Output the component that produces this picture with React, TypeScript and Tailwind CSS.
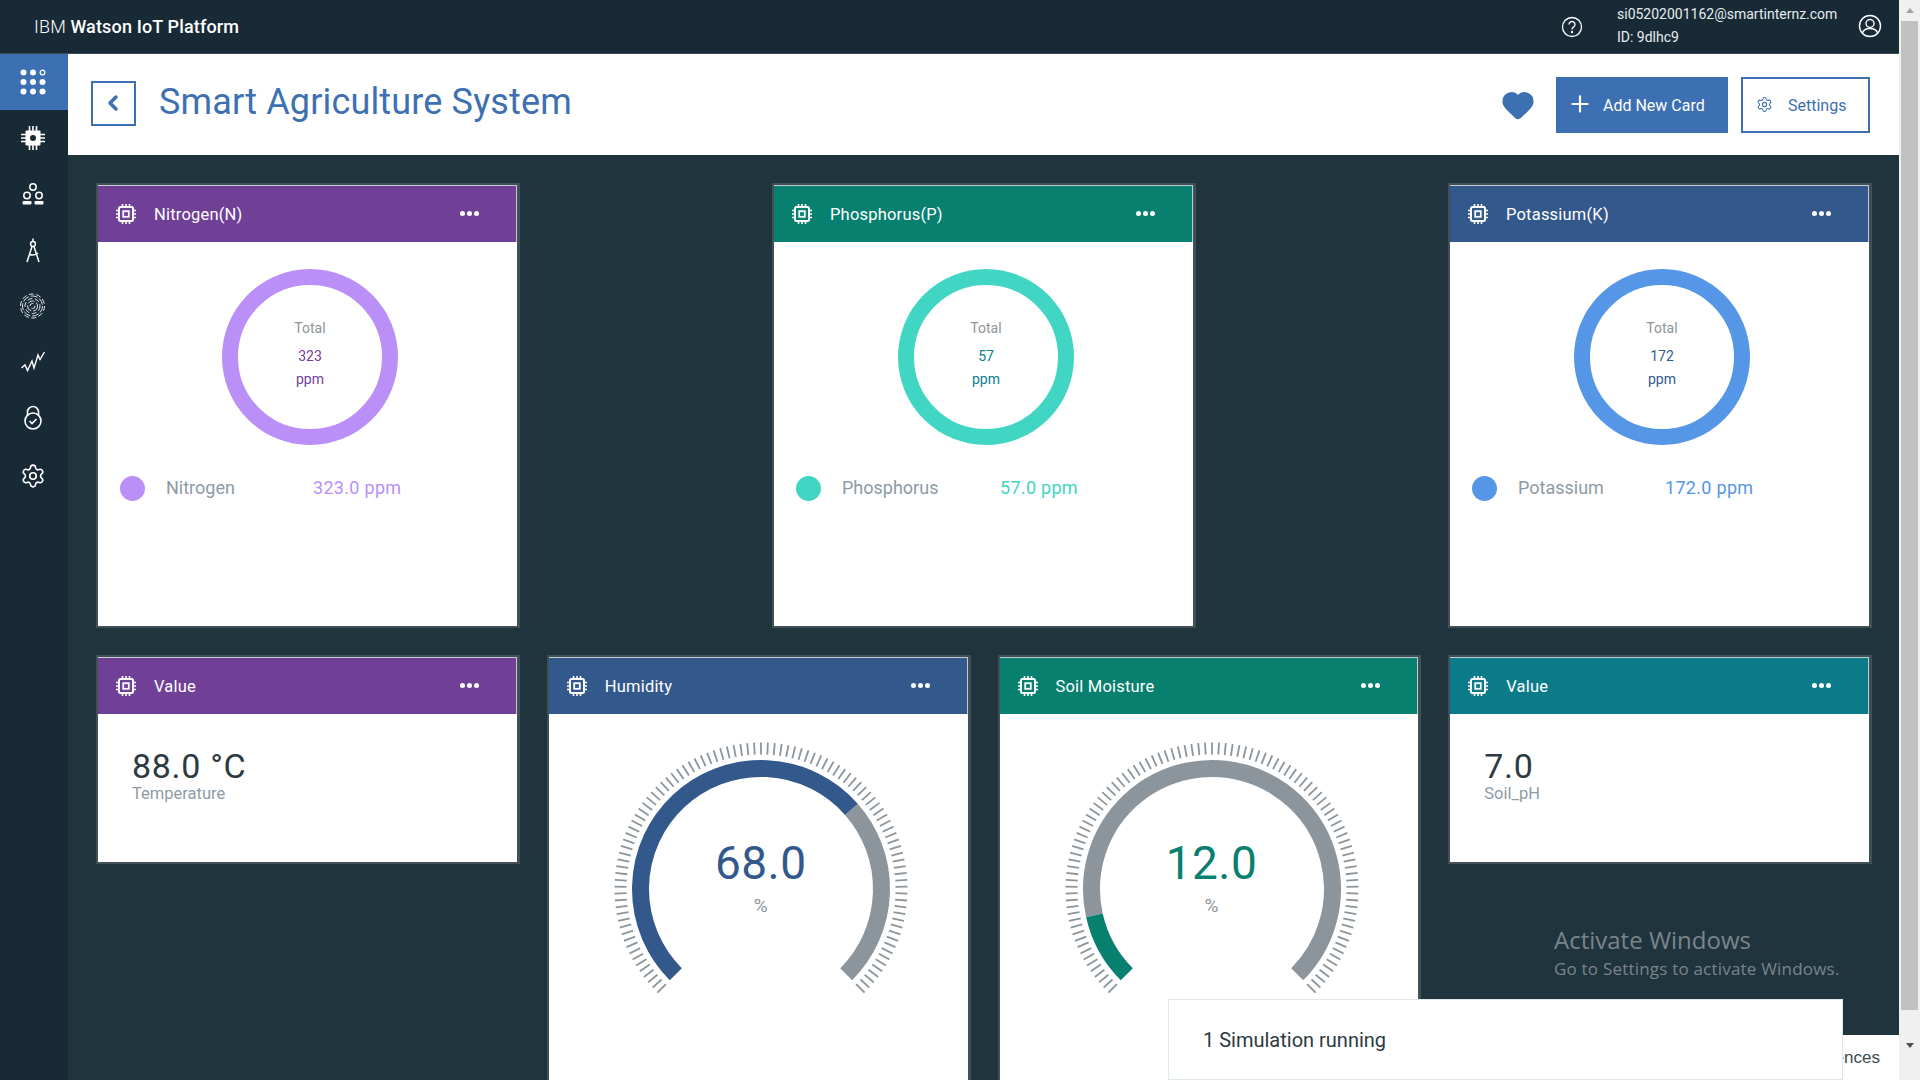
import React from "react";
import { Settings, Plus, ChevronLeft, Heart } from "lucide-react";

const FONT = "font-['Roboto','Noto_Sans',sans-serif]";

function Chip() {
  return (
    <svg width="22" height="22" viewBox="0 0 22 22" fill="none" stroke="white" className="shrink-0">
      <rect x="4" y="4" width="14" height="14" rx="1.5" strokeWidth="2" />
      <rect x="8.2" y="8.2" width="5.6" height="5.6" strokeWidth="1.8" />
      <path d="M7.5 1v3M11 1v3M14.5 1v3M7.5 18v3M11 18v3M14.5 18v3M1 7.5h3M1 11h3M1 14.5h3M18 7.5h3M18 11h3M18 14.5h3" strokeWidth="1.6" />
    </svg>
  );
}

function Dots() {
  return (
    <div className="flex gap-[2px] shrink-0">
      <span className="w-[5px] h-[5px] rounded-full bg-white" />
      <span className="w-[5px] h-[5px] rounded-full bg-white" />
      <span className="w-[5px] h-[5px] rounded-full bg-white" />
    </div>
  );
}

function Card({ title, head, className, children }: { title: string; head: string; className: string; children?: React.ReactNode }) {
  return (
    <div className={`border-2 border-r-[3px] border-[#414f56] bg-white overflow-hidden ${className}`}>
      <div className={`h-[57px] pl-[17px] pr-[37px] flex items-center border-t border-r border-[#c3cbd0] ${head}`}>
        <Chip />
        <span className="ml-[17px] mt-[2px] flex-1 text-white text-[16.5px] tracking-[0.2px]">{title}</span>
        <div className="-mt-[2px]">
          <Dots />
        </div>
      </div>
      {children}
    </div>
  );
}

function Donut({ color, total, textColor, name, value, nameW }: { color: string; total: string; textColor: string; name: string; value: string; nameW: string }) {
  return (
    <div>
      <div className="relative ml-[124px] mt-[27px] w-[176px] h-[176px]">
        <svg width="176" height="176" viewBox="0 0 176 176">
          <circle cx="88" cy="88" r="80" fill="none" stroke={color} strokeWidth="16" />
        </svg>
        <div className="absolute inset-0 flex flex-col items-center text-[14px] pt-[49px]">
          <span className="text-[#8c959b] leading-[20px]">Total</span>
          <span className="leading-[20px] mt-[8px]" style={{ color: textColor }}>{total}</span>
          <span className="leading-[20px] mt-[3px]" style={{ color: textColor }}>ppm</span>
        </div>
      </div>
      <div className="flex items-center ml-[22px] mt-[31px]">
        <span className="w-[25px] h-[25px] rounded-full" style={{ backgroundColor: color }} />
        <span className={`ml-[21px] -mt-[2px] text-[18px] text-[#8c9ba5] ${nameW}`}>{name}</span>
        <span className="text-[18px] -mt-[2px] tracking-[0.3px]" style={{ color }}>{value}</span>
      </div>
    </div>
  );
}

function polar(r: number, deg: number) {
  const a = ((deg - 90) * Math.PI) / 180;
  return [150 + r * Math.cos(a), 150 + r * Math.sin(a)];
}

function arc(r: number, from: number, to: number) {
  const [x1, y1] = polar(r, from);
  const [x2, y2] = polar(r, to);
  return `M${x1} ${y1}A${r} ${r} 0 ${to - from > 180 ? 1 : 0} 1 ${x2} ${y2}`;
}

function Gauge({ pct, color, label }: { pct: number; color: string; label: string }) {
  const start = -135;
  const mid = start + (270 * pct) / 100;
  const ticks = Array.from({ length: 101 }, (_, i) => start + i * 2.7);
  return (
    <div className="relative w-[300px] h-[300px] ml-[62px] mt-[25px]">
      <svg width="300" height="300" viewBox="0 0 300 300">
        {ticks.map((t) => {
          const [x1, y1] = polar(134.5, t);
          const [x2, y2] = polar(146.5, t);
          return <line key={t} x1={x1} y1={y1} x2={x2} y2={y2} stroke="#8c959b" strokeWidth="1.8" />;
        })}
        <path d={arc(120.5, mid, 135)} fill="none" stroke="#8c959b" strokeWidth="17" />
        <path d={arc(120.5, start, mid)} fill="none" stroke={color} strokeWidth="17" />
      </svg>
      <div className="absolute inset-0 flex flex-col items-center pt-[96px]">
        <span className="text-[46px] leading-[56px] tracking-[0.5px]" style={{ color }}>{label}</span>
        <span className="text-[19px] leading-[20px] text-[#8c959b] mt-[5px]">%</span>
      </div>
    </div>
  );
}

function ValueBody({ value, label }: { value: string; label: string }) {
  return (
    <div className="pl-[34px] pt-[30px]">
      <div className="text-[34px] leading-[44px] text-[#2d3a42] tracking-[0.7px]">{value}</div>
      <div className="text-[16.5px] leading-[20px] -mt-[4px] text-[#8c9ba5]">{label}</div>
    </div>
  );
}

function NavIcon({ children }: { children: React.ReactNode }) {
  return (
    <svg width="28" height="28" viewBox="0 0 28 28" fill="none" stroke="white" strokeWidth="1.5">
      {children}
    </svg>
  );
}

const fingerprintRadii = [2.5, 5, 7.5, 10, 12];

function Sidebar() {
  const items: { pad: string; node: React.ReactNode }[] = [
    {
      pad: "",
      node: (
        <NavIcon>
          <path d="M10.5 2v24M14 2v24M17.5 2v24M2 10.5h24M2 14h24M2 17.5h24" strokeWidth="1.6" />
          <rect x="6.5" y="6.5" width="15" height="15" rx="1" fill="white" stroke="none" />
          <circle cx="14" cy="14" r="3" fill="#172a36" stroke="none" />
        </NavIcon>
      ),
    },
    {
      pad: "pt-[2px]",
      node: (
        <NavIcon>
          <circle cx="14" cy="6" r="3.2" />
          <circle cx="8" cy="14.5" r="3.2" />
          <circle cx="20" cy="14.5" r="3.2" />
          <rect x="3.5" y="20" width="9" height="3.6" rx="1" fill="white" stroke="none" />
          <rect x="15.5" y="20" width="9" height="3.6" rx="1" fill="white" stroke="none" />
        </NavIcon>
      ),
    },
    {
      pad: "pt-[1px]",
      node: (
        <NavIcon>
          <path d="M14 1.5v3" />
          <circle cx="14" cy="7" r="2.4" />
          <path d="M13 9.5 8 25M15 9.5 20 25M10.5 17.5c3 1 6 .5 8.5-1.5" />
        </NavIcon>
      ),
    },
    {
      pad: "",
      node: (
        <NavIcon>
          {fingerprintRadii.map((r, i) => (
            <circle key={r} cx="13.5" cy="14" r={r} strokeWidth="0.9" strokeDasharray={i % 2 ? "7 2" : "5 2.5"} />
          ))}
        </NavIcon>
      ),
    },
    {
      pad: "pb-[3px]",
      node: (
        <NavIcon>
          <path d="M2.5 21l3.5-3 2.5 5.500L13 14l2 7 4-13 2 4.500L25.500 5" strokeWidth="1.400" />
        </NavIcon>
      ),
    },
    {
      pad: "",
      node: (
        <NavIcon>
          <circle cx="14" cy="17" r="8" strokeWidth="1.6" />
          <path d="M8.5 11.5V8a5.5 5.5 0 0 1 11 0v3.500" strokeWidth="1.6" />
          <path d="M10.500 17l2.500 2.500 4.500-4.500" strokeWidth="1.6" />
        </NavIcon>
      ),
    },
    { pad: "pt-[3px]", node: <Settings size={26} color="white" strokeWidth={1.5} /> },
  ];
  return (
    <div className="w-[68px] shrink-0 bg-[#172a36] flex flex-col">
      <div className="h-[56px] bg-[#3d70b2] flex items-center justify-center pr-[2px]">
        <svg width="28" height="28" viewBox="0 0 28 28" fill="white">
          <circle cx="4.500" cy="4.500" r="3" />
          <circle cx="14" cy="4.500" r="3" />
          <circle cx="23.500" cy="4.500" r="2.300" fill="none" stroke="white" strokeWidth="1.300" />
          <circle cx="4.500" cy="14" r="3" />
          <circle cx="14" cy="14" r="3" />
          <circle cx="23.500" cy="14" r="3" />
          <circle cx="4.500" cy="23.500" r="3" />
          <circle cx="14" cy="23.500" r="3" />
          <circle cx="23.500" cy="23.500" r="3" />
        </svg>
      </div>
      {items.map((it, i) => (
        <div key={i} className={`h-[56px] flex items-center justify-center pr-[2px] ${it.pad}`}>{it.node}</div>
      ))}
    </div>
  );
}

export default function App() {
  return (
    <div className={`relative w-[1920px] h-[1080px] overflow-hidden flex bg-[#20343e] ${FONT}`}>
      <div className="w-[1899px] flex flex-col">
        <header className="h-[54px] shrink-0 bg-[#172a36] border-b border-[#3a4b55] flex items-center pl-[34px] pr-[17px] text-white">
          <div className="text-[18px] flex-1 tracking-[0.15px] -mt-px">
            <span className="font-light">IBM </span>
            <span className="font-medium">Watson IoT Platform</span>
          </div>
          <svg width="22" height="22" viewBox="0 0 22 22" fill="none" stroke="white" strokeWidth="1.300" className="mr-[34px]">
            <circle cx="11" cy="11" r="9.500" />
            <path d="M8 8.500a3 3 0 1 1 4.500 2.600c-1 .6-1.500 1.200-1.500 2.400" />
            <circle cx="11" cy="16" r=".6" fill="white" />
          </svg>
          <div className="w-[241px] text-[14px] leading-[23px] mt-[-2px] text-[#e8ecee]">
            <div>si05202001162@smartinternz.com</div>
            <div>ID: 9dlhc9</div>
          </div>
          <svg width="24" height="24" viewBox="0 0 24 24" fill="none" stroke="white" strokeWidth="1.400" className="-mt-px">
            <circle cx="12" cy="12" r="10.500" />
            <circle cx="12" cy="9.500" r="4" />
            <path d="M4.500 19c1-3.500 3.500-4.500 7.500-4.500s6.500 1 7.500 4.500" />
          </svg>
        </header>
        <div className="flex flex-1 min-h-0">
          <Sidebar />
          <main className="flex-1 min-w-0 overflow-hidden flex flex-col">
            <div className="h-[101px] shrink-0 bg-white flex items-center pl-[23px] pr-[29px]">
              <button className="w-[45px] h-[45px] -mt-[3px] border-2 border-[#3d70b2] flex items-center justify-center pr-[2px]">
                <ChevronLeft size={24} color="#3d70b2" strokeWidth={3.500} />
              </button>
              <h1 className="ml-[23px] flex-1 -mt-[5px] text-[36px] text-[#3d70b2] tracking-[0.15px]">Smart Agriculture System</h1>
              <Heart size={34} fill="#3d70b2" color="#3d70b2" className="mr-[21px] mt-[1px]" />
              <button className="h-[56px] w-[172px] mt-[1px] bg-[#3d70b2] text-white flex items-center pl-[11px] text-[16px]">
                <Plus size={26} strokeWidth={2} className="-mt-[3px]" />
                <span className="ml-[10px] mt-[2px]">Add New Card</span>
              </button>
              <button className="h-[56px] w-[129px] mt-[1px] ml-[13px] border-2 border-[#3d70b2] text-[#3d70b2] flex items-center pl-[13px] text-[16px]">
                <Settings size={17} strokeWidth={1.500} className="-mt-[2px]" />
                <span className="ml-[15px] mt-[2px]">Settings</span>
              </button>
            </div>
            <div className="pt-[28px] pl-[28px] pr-[27px] flex flex-col gap-[27px]">
              <div className="flex justify-between">
                <Card title="Nitrogen(N)" head="bg-[#704096]" className="w-[424px] h-[445px]">
                  <Donut color="#ba8ff7" total="323" textColor="#734098" name="Nitrogen" value="323.0 ppm" nameW="w-[147px]" />
                </Card>
                <Card title="Phosphorus(P)" head="bg-[#088070]" className="w-[424px] h-[445px]">
                  <Donut color="#41d6c3" total="57" textColor="#0a7d8c" name="Phosphorus" value="57.0 ppm" nameW="w-[158px]" />
                </Card>
                <Card title="Potassium(K)" head="bg-[#33598c]" className="w-[424px] h-[445px]">
                  <Donut color="#5596e6" total="172" textColor="#33598c" name="Potassium" value="172.0 ppm" nameW="w-[147px]" />
                </Card>
              </div>
              <div className="grid grid-cols-4 gap-[27px] items-start">
                <Card title="Value" head="bg-[#704096]" className="h-[209px]">
                  <ValueBody value="88.0 °C" label="Temperature" />
                </Card>
                <Card title="Humidity" head="bg-[#33598c]" className="h-[480px]">
                  <Gauge pct={68} color="#33598c" label="68.0" />
                </Card>
                <Card title="Soil Moisture" head="bg-[#088070]" className="h-[480px]">
                  <Gauge pct={12} color="#088070" label="12.0" />
                </Card>
                <Card title="Value" head="bg-[#0b7b8a]" className="h-[209px]">
                  <ValueBody value="7.0" label="Soil_pH" />
                </Card>
              </div>
            </div>
          </main>
        </div>
      </div>

      <div className="w-[21px] shrink-0 bg-[#f0f0f0] flex flex-col items-center">
        <div className="h-[21px] flex items-center justify-center">
          <div className="w-0 h-0 border-x-[4px] border-x-transparent border-b-[5px] border-b-[#a0a0a0]" />
        </div>
        <div className="w-[17px] h-[989px] bg-[#c1c1c1]" />
        <div className="flex-1 flex items-center justify-center">
          <div className="w-0 h-0 border-x-[4px] border-x-transparent border-t-[5px] border-t-[#505050]" />
        </div>
      </div>

      <div className="absolute left-[1554px] top-[922px] text-[#7a858a] font-['Open_Sans',sans-serif]">
        <div className="text-[24px] leading-[36px]">Activate Windows</div>
        <div className="text-[17px] leading-[24px] -mt-[1px] tracking-[0.2px]">Go to Settings to activate Windows.</div>
      </div>

      <div className="absolute left-[1600px] w-[299px] top-[1035px] h-[45px] bg-white flex items-center justify-end pr-[19px] text-[17px] text-[#3a4a52] font-['Liberation_Sans',sans-serif]">
        Preferences
      </div>

      <div className="absolute left-[1168px] top-[999px] w-[675px] h-[81px] bg-white border border-[#dfe9e9] flex items-center pl-[34px] text-[20px] text-[#2d3a42]">
        1 Simulation running
      </div>
    </div>
  );
}
